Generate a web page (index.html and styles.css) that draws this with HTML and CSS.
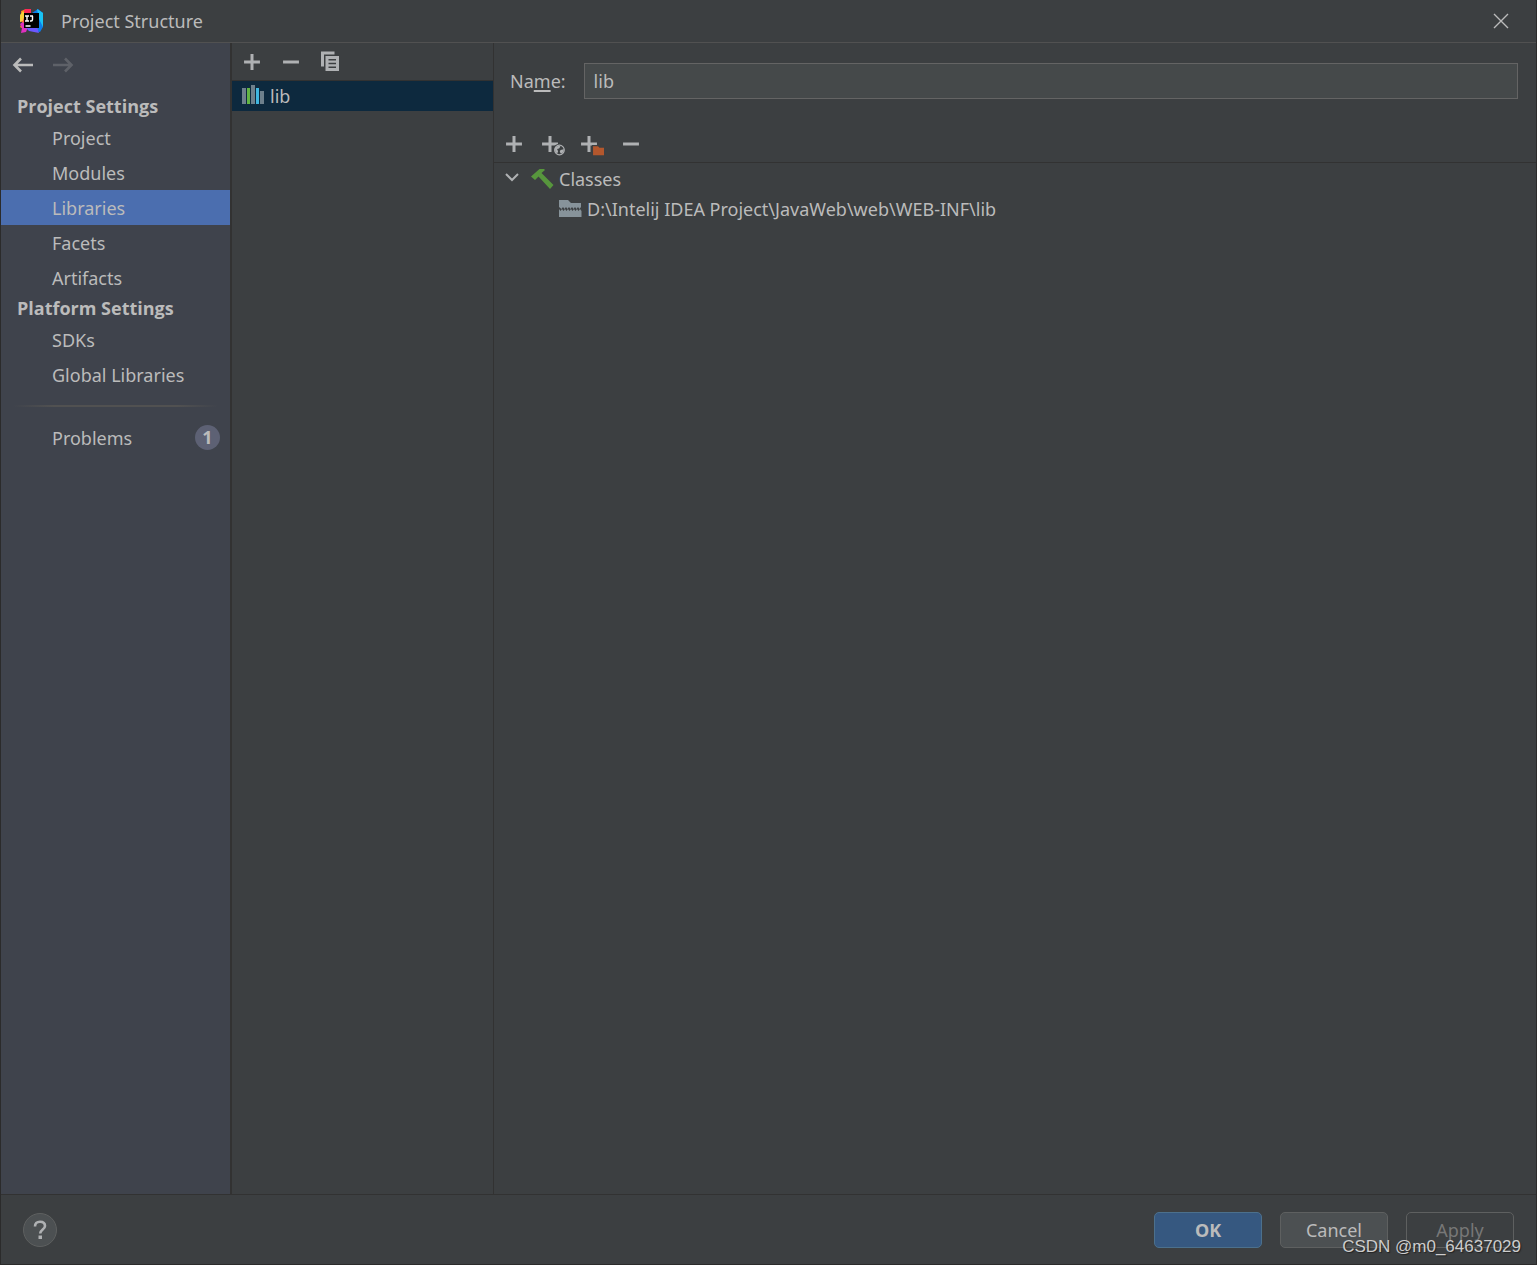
FILE: index.html
```html
<!DOCTYPE html>
<html lang="en">
<head>
    <meta charset="UTF-8">
    <meta name="viewport" content="width=device-width, initial-scale=1.0">
    <title>Project Structure</title>
    <link rel="stylesheet" href="styles.css">
</head>
<body>
    <header class="titlebar">
        <svg class="icon" viewBox="0 0 24 24">
            <path fill="#fc801d" d="M2 2l5-2 3 2v17l-4 2-5-3 2-4z"/>
            <path fill="#fe2857" d="M6 0h6v5L5 12 1 13z"/>
            <path fill="#f7d038" d="M1 6l3-4 2 3-2 7-3 1z"/>
            <path fill="#e030c0" d="M4 13l5 5-2 5-5 1 1-5-2-4z"/>
            <path fill="#0c7dea" d="M13 4l6-4 5 4v14l-3 5-10-2z"/>
            <path fill="#19c3f5" d="M18 0l6 4v14l-4-8z"/>
            <path fill="#6b57ff" d="M6 18h12l2 6-10-2z"/>
            <path fill="#000" d="M5 4h15v15H5z"/>
            <path fill="none" stroke="#fff" stroke-width="1.400" d="M6 7h4M8 7v5M6 12h4M11 7h3M13.500 7v3.500q0 1.500-1.500 1.500H11M6.500 17h5"/>
        </svg>
        <h1>Project Structure</h1>
        <button class="tool close" aria-label="Close">
            <svg class="icon" viewBox="0 0 24 24"><path fill="none" stroke="#bbb" stroke-width="1.400" d="M5 5l14 14M19 5L5 19"/></svg>
        </button>
    </header>

    <main class="content">
        <nav class="sidebar">
            <div class="history">
                <button class="tool" aria-label="Back">
                    <svg class="icon" viewBox="0 0 24 24"><path class="arrow" d="M22 12H4M10 5.500L3.500 12l6.500 6.500"/></svg>
                </button>
                <button class="tool" aria-label="Forward" disabled>
                    <svg class="icon" viewBox="0 0 24 24"><path class="arrow" d="M2 12h18M14 5.500l6.500 6.500-6.500 6.500"/></svg>
                </button>
            </div>
            <h2>Project Settings</h2>
            <a href="#project">Project</a>
            <a href="#modules">Modules</a>
            <a href="#libraries" class="selected">Libraries</a>
            <a href="#facets">Facets</a>
            <a href="#artifacts">Artifacts</a>
            <h2>Platform Settings</h2>
            <a href="#sdks">SDKs</a>
            <a href="#global">Global Libraries</a>
            <hr>
            <a href="#problems">Problems <span class="count">1</span></a>
        </nav>

        <section class="libraries">
            <div class="toolbar">
                <button class="tool" aria-label="Add">
                    <svg class="icon" viewBox="0 0 16 16"><path class="line" d="M8 2.700v10.600M2.700 8h10.600"/></svg>
                </button>
                <button class="tool" aria-label="Remove">
                    <svg class="icon" viewBox="0 0 16 16"><path class="line" d="M2.700 8h10.600"/></svg>
                </button>
                <button class="tool" aria-label="Copy">
                    <svg class="icon" viewBox="0 0 16 16">
                        <path fill="#afb1b3" d="M2 1h9v2H4v8H2z"/>
                        <path fill="#afb1b3" fill-rule="evenodd" d="M5 4h9v10H5zM7 6v1h5V6zM7 8.500v1h5v-1zM7 11v1h5v-1z"/>
                    </svg>
                </button>
            </div>
            <ul class="list">
                <li>
                    <svg class="icon" viewBox="0 0 24 24">
                        <path fill="#6e808c" d="M1 4h4v16H1zM10 1h4v19h-4zM19 7h4v13h-4z"/>
                        <path fill="#62b543" d="M6 4h3v16H6z"/>
                        <path fill="#40b6e0" d="M15 4h3v16h-3z"/>
                    </svg>
                    lib
                </li>
            </ul>
        </section>

        <section class="details">
            <div class="field">
                <label for="name">Na<u>m</u>e:</label>
                <input type="text" id="name" value="lib">
            </div>
            <div class="toolbar">
                <button class="tool" aria-label="Add">
                    <svg class="icon" viewBox="0 0 16 16"><path class="line" d="M8 2.700v10.600M2.700 8h10.600"/></svg>
                </button>
                <button class="tool" aria-label="Specify documentation URL">
                    <svg class="icon" viewBox="0 0 16 16">
                        <path class="line" d="M6 2.700v10.600M.7 8h10.600"/>
                        <circle cx="12.300" cy="12" r="4.200" fill="#3c3f41"/>
                        <circle cx="12.300" cy="12" r="3.200" fill="none" stroke="#afb1b3" stroke-width=".8"/>
                        <path fill="#afb1b3" d="M9.300 10.500l2.500-1.500 1.200.6-1 1.400-1.300.3.700 1.500-.6 1.700-1.300-1.500zM13 12l2.300-.5-.5 2-1.500 1-.8-1.300z"/>
                    </svg>
                </button>
                <button class="tool" aria-label="Exclude">
                    <svg class="icon" viewBox="0 0 16 16">
                        <path class="line" d="M6 2.700v10.600M.7 8h10.600"/>
                        <path fill="#3c3f41" d="M8 8.700h4.500v1H16V16H8z"/>
                        <path fill="#b3572d" d="M8.700 9.500H12l1 1h3v5H8.700z"/>
                    </svg>
                </button>
                <button class="tool" aria-label="Remove">
                    <svg class="icon" viewBox="0 0 16 16"><path class="line" d="M2.700 8h10.600"/></svg>
                </button>
            </div>
            <ul class="tree">
                <li>
                    <div class="node">
                        <svg class="icon" viewBox="0 0 24 24"><path fill="none" stroke="#afb1b3" stroke-width="2" d="M5 7l6 6 6-6"/></svg>
                        <svg class="icon" viewBox="0 0 24 24"><path fill="#57963d" d="M1 9.500L9.500 2H14l1 1-3.500 3 12 12-3.500 4L8.500 9.500 5 13z"/></svg>
                        Classes
                    </div>
                    <ul>
                        <li class="node">
                            <svg class="icon" viewBox="0 0 24 24">
                                <path fill="#87939a" d="M1 3h9l3 3h10v4l-1.500 2-1.500-2-1.500 2-1.500-2-1.500 2-1.500-2-1.500 2-1.500-2-1.500 2-1.500-2-1.500 2-1.500-2-1.500 2L1 10z"/>
                                <path fill="#87939a" d="M1 12l1.500 2L4 12l1.500 2L7 12l1.500 2 1.500-2 1.500 2 1.500-2 1.500 2 1.500-2 1.500 2 1.500-2 1.500 2 1.500-2 1.500 2v6H1z"/>
                            </svg>
                            D:\Intelij IDEA Project\JavaWeb\web\WEB-INF\lib
                        </li>
                    </ul>
                </li>
            </ul>
        </section>
    </main>

    <footer class="footer">
        <button class="help" aria-label="Help">
            <svg class="icon" viewBox="0 0 24 24">
                <path fill="none" stroke="#afb1b3" stroke-width="2.600" d="M7 8.500q0-4.700 5-4.700t5 4.200c0 3.500-4.800 3.500-4.800 7.500"/>
                <path fill="#afb1b3" d="M10.500 17.500h3.500v3.500h-3.500z"/>
            </svg>
        </button>
        <button class="btn primary">OK</button>
        <button class="btn">Cancel</button>
        <button class="btn" disabled>Apply</button>
    </footer>
    <div class="watermark">CSDN @m0_64637029</div>
</body>
</html>
```
FILE: styles.css
```css
* {
    margin: 0;
    padding: 0;
    box-sizing: border-box;
}

body {
    display: flex;
    flex-direction: column;
    position: relative;
    height: 100vh;
    border: 1px solid #2b2b2b;
    border-top: none;
    background-color: #3c3f41;
    color: #bbbbbb;
    font-family: "Noto Sans", "Open Sans", sans-serif;
    font-size: 18px;
    line-height: 30px;
    overflow: hidden;
}

ul {
    list-style: none;
}

button,
input {
    font: inherit;
    color: inherit;
}

.icon {
    display: block;
    flex: none;
    width: 24px;
    height: 24px;
}

.line {
    fill: none;
    stroke: #afb1b3;
    stroke-width: 2;
}

.tool {
    border: none;
    background: none;
}

.tool:disabled {
    opacity: 0.25;
}

/* title bar */
.titlebar {
    display: flex;
    align-items: center;
    gap: 18px;
    height: 43px;
    padding: 0 23px 0 18px;
    border-bottom: 1px solid #515151;
}

.titlebar h1 {
    font-size: 18px;
    font-weight: normal;
}

.close {
    margin-left: auto;
}

.content {
    display: flex;
    flex: 1;
    min-height: 0;
}

/* left navigation */
.sidebar {
    width: 231px;
    background-color: #3f434c;
    border-right: 2px solid #323232;
}

.history {
    display: flex;
    gap: 16px;
    padding: 10px 10px 16px;
}

.arrow {
    fill: none;
    stroke: #bbbbbb;
    stroke-width: 2.6;
}

.sidebar h2 {
    padding-left: 16px;
    font-family: "Open Sans", "Noto Sans", sans-serif;
    font-size: 18px;
    line-height: 27px;
}

.sidebar a {
    display: flex;
    align-items: center;
    justify-content: space-between;
    height: 35px;
    padding: 0 10px 0 51px;
    color: inherit;
    text-decoration: none;
}

.sidebar .selected {
    background-color: #4b6eaf;
}

.sidebar hr {
    height: 2px;
    margin: 13px 12px;
    border: none;
    background: linear-gradient(to right, transparent, #515151 20%, #515151 80%, transparent);
}

.count {
    width: 25px;
    border-radius: 50%;
    background-color: #5d6174;
    font-weight: bold;
    line-height: 25px;
    text-align: center;
}

/* list of libraries */
.libraries {
    width: 262px;
    border-right: 1px solid #323232;
}

.toolbar {
    display: flex;
    align-items: center;
    gap: 15px;
    height: 38px;
    padding: 0 8px;
    border-bottom: 1px solid #323232;
}

.list li {
    display: flex;
    align-items: center;
    gap: 5px;
    padding-left: 9px;
    background-color: #0d293e;
}

/* library details */
.details {
    flex: 1;
}

.field {
    display: flex;
    align-items: center;
    gap: 18px;
    padding: 20px 18px 26px 16px;
}

.field u {
    text-underline-offset: 2px;
    text-decoration-thickness: 2px;
}

.field input {
    flex: 1;
    height: 36px;
    padding: 0 9px;
    border: 1px solid #646464;
    background-color: #45494a;
}

.tree {
    padding: 1px 7px;
}

.tree ul {
    padding-left: 57px;
}

.node {
    display: flex;
    align-items: center;
    gap: 5px;
}

/* bottom buttons */
.footer {
    display: flex;
    align-items: center;
    gap: 18px;
    height: 70px;
    padding: 0 22px;
    border-top: 1px solid #323232;
}

.help {
    display: flex;
    align-items: center;
    justify-content: center;
    width: 34px;
    height: 34px;
    margin-right: auto;
    border: 1px solid #5e6060;
    border-radius: 50%;
    background-color: #4c5052;
}

.btn {
    width: 108px;
    height: 36px;
    border: 1px solid #5e6060;
    border-radius: 5px;
    background-color: #4c5052;
}

.primary {
    border-color: #4c708c;
    background-color: #365880;
    font-weight: bold;
}

.btn:disabled {
    background-color: transparent;
    color: #777777;
}

.watermark {
    position: absolute;
    right: 15px;
    bottom: 7px;
    color: #cccccc;
    font-family: "Liberation Sans", Arial, sans-serif;
    font-size: 17px;
    line-height: 20px;
    text-shadow: 1px 1px 1px #222222;
}
```
